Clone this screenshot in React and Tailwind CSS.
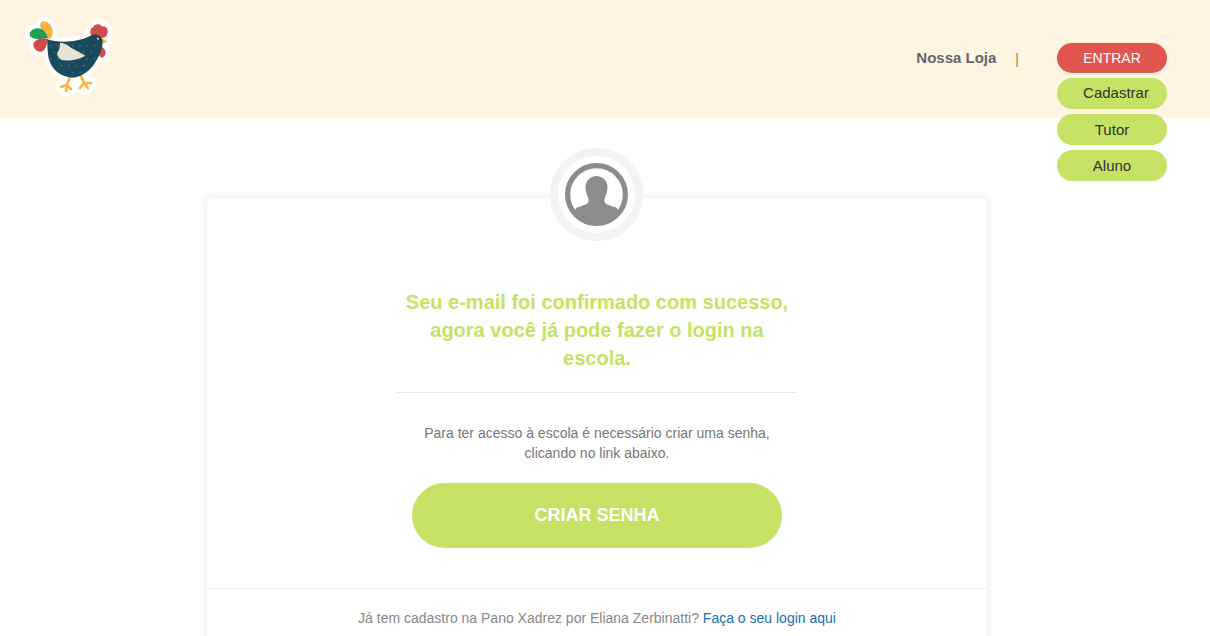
const shapes = [
  { d: "M120 102 C98 92 84 62 94 51 C108 42 126 58 128 80 C128 90 125 97 120 102 Z", fill: "#f7b33d" },
  { d: "M114 99 C90 104 62 104 59 90 C58 74 80 66 94 72 C104 77 110 88 114 99 Z", fill: "#1f9d55" },
  { d: "M114 102 C95 96 74 102 70 118 C70 134 86 144 98 139 C108 131 112 115 114 102 Z", fill: "#cf4b4c" },
  { d: "M250 100 C238 88 238 70 250 67 C252 56 272 54 276 65 C288 60 298 76 291 88 C288 98 278 100 270 100 Z", fill: "#cf4b4c" },
  { d: "M276 100 L292 110 L276 116 Z", fill: "#f7b33d" },
  { d: "M270 122 C290 130 292 150 277 158 C262 156 266 136 270 122 Z", fill: "#cf4b4c" },
  { d: "M112 103 C140 113 200 114 238 94 C255 84 272 88 277 104 C280 125 270 150 257 170 C242 196 215 216 187 218 C150 216 124 192 116 160 C112 140 112 120 112 103 Z", fill: "#1b4a5c" },
];
const dots = [];
for (let y = 122; y < 212; y += 20) {
  for (let x = 122 + ((y - 122) / 20) % 2 * 11; x < 262; x += 22) {
    const inside = y < 170 || (x > 135 + (y - 170) && x < 250 - (y - 170));
    if (inside) dots.push([x, y]);
  }
}

function Chicken() {
  const legs = "M180 216 L171 240 M171 240 L153 246 M171 240 L168 258 M171 240 L183 252 M213 213 L222 234 M222 234 L210 249 M222 234 L243 234 M222 234 L234 249";
  return (
    <svg width="120" height="100" viewBox="0 0 360 300">
      <g fill="white" stroke="white" strokeWidth="26" strokeLinejoin="round" strokeLinecap="round">
        {shapes.map((s) => <path key={s.d} d={s.d} />)}
        <path d={legs} fill="none" strokeWidth="36" />
      </g>
      <path d={legs} fill="none" stroke="#f9b540" strokeWidth="8" strokeLinecap="round" />
      {shapes.map((s) => <path key={s.d} d={s.d} fill={s.fill} />)}
      <g fill="#2f7482">
        {dots.map(([x, y]) => <circle key={`${x}-${y}`} cx={x} cy={y} r="2.8" />)}
      </g>
      <circle cx="264" cy="101" r="3" fill="#e6e2d4" />
      <path d="M150 113 C165 112 178 125 190 132 C205 140 218 147 226 152 C210 162 185 168 160 166 C148 164 140 152 142 143 C148 135 150 125 150 113 Z" fill="#e6e2d4" />
    </svg>
  );
}

function Avatar() {
  return (
    <svg width="63" height="63" viewBox="0 0 63 63">
      <defs>
        <clipPath id="inner"><circle cx="31.5" cy="31.5" r="27.5" /></clipPath>
      </defs>
      <circle cx="31.5" cy="31.5" r="28.9" fill="none" stroke="#8c8c8c" strokeWidth="5.2" />
      <g clipPath="url(#inner)" fill="#8c8c8c">
        <path d="M31.5 13 C38 13 42.5 18 42.5 24 C42.5 29 40.5 33 39.5 36 C39 40 41 41 44 42 C47 43.5 50 44 52 45 L60 63 L3 63 L11 45 C13 44 16 43.5 19 42 C22 41 24 40 23.5 36 C22.5 33 20.5 29 20.5 24 C20.5 18 25 13 31.5 13 Z" />
      </g>
    </svg>
  );
}

function Pill({ className, children }) {
  return (
    <a className={`flex w-[110px] items-center justify-center rounded-full ${className}`}>
      {children}
    </a>
  );
}

const green = "h-[31px] bg-[#c5e264] text-[15px] text-[#333]";

export default function App() {
  return (
    <div className="h-[636px] overflow-hidden bg-white font-['Liberation_Sans',Arial,sans-serif]">
      <header className="flex h-[118px] items-start justify-between bg-[#fff3e2] pl-[10px] pr-[43px] pt-[5px]">
        <Chicken />
        <nav className="relative z-10 flex items-start pt-[38px]">
          <a className="mt-[5px] text-[15px] font-bold leading-[20px] text-[#666]">Nossa Loja</a>
          <span className="ml-[19px] mt-[6px] text-[14px] leading-[20px] text-[#a5794a]">|</span>
          <div className="ml-[38px] flex flex-col gap-[5px]">
            <Pill className="h-[30px] bg-[#e0564f] text-[14px] text-white">ENTRAR</Pill>
            <Pill className={`${green} pl-[8px]`}>Cadastrar</Pill>
            <Pill className={`${green} pt-[2px]`}>Tutor</Pill>
            <Pill className={`${green} pt-[2px]`}>Aluno</Pill>
          </div>
        </nav>
      </header>

      <main className="relative ml-[207px] mt-[80px] w-[780px] rounded-[6px] bg-white text-center shadow-[0_0_8px_rgba(0,0,0,0.1)]">
        <div className="absolute left-[343px] top-[-50px] flex h-[93px] w-[93px] items-center justify-center rounded-full border-[8px] border-[#f3f3f3] bg-white">
          <Avatar />
        </div>
        <div className="mx-auto flex w-[400px] flex-col items-center pt-[90px]">
          <h1 className="w-full border-b border-[#e8e8e8] pb-[20px] text-[20px] font-bold leading-[28px] text-[#c5e264]">
            Seu e-mail foi confirmado com sucesso,
            <br />
            agora você já pode fazer o login na
            <br />
            escola.
          </h1>
          <p className="mt-[30px] text-[14px] leading-[20px] text-[#777]">
            Para ter acesso à escola é necessário criar uma senha,
            <br />
            clicando no link abaixo.
          </p>
          <a className="mt-[20px] flex h-[65px] w-[370px] items-center justify-center rounded-full bg-[#c5e264] text-[18px] font-bold text-white">
            CRIAR SENHA
          </a>
        </div>
        <div className="mt-[40px] border-t border-[#eeeeee] pb-[40px] pt-[19px] text-[14px] leading-[20px] text-[#888]">
          Já tem cadastro na Pano Xadrez por Eliana Zerbinatti? <a className="text-[#1a6fb5]">Faça o seu login aqui</a>
        </div>
      </main>
    </div>
  );
}
